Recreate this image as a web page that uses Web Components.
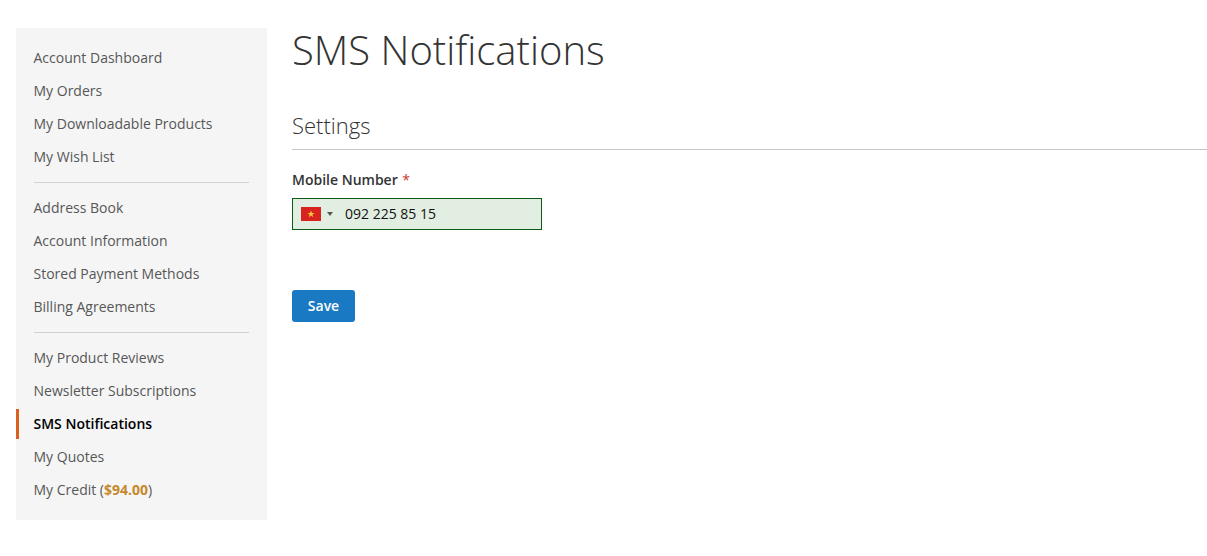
<!DOCTYPE html>
<html lang="en"><head><meta charset="utf-8"><title>SMS Notifications</title>
<style>
html,body{margin:0;background:#fff}
body{font-family:"Open Sans",sans-serif;font-size:14px;color:#333}
</style></head><body>
<account-page>
<account-nav slot="nav">
<nav-link>Account Dashboard</nav-link><nav-link>My Orders</nav-link><nav-link>My Downloadable Products</nav-link><nav-link>My Wish List</nav-link>
<nav-sep></nav-sep>
<nav-link>Address Book</nav-link><nav-link>Account Information</nav-link><nav-link>Stored Payment Methods</nav-link><nav-link>Billing Agreements</nav-link>
<nav-sep></nav-sep>
<nav-link>My Product Reviews</nav-link><nav-link>Newsletter Subscriptions</nav-link><nav-link current>SMS Notifications</nav-link><nav-link>My Quotes</nav-link>
<nav-link>My Credit (<credit-amount>$94.00</credit-amount>)</nav-link>
</account-nav>
<sms-form></sms-form>
</account-page>
<script>
function def(name,html){customElements.define(name,class extends HTMLElement{constructor(){super();this.attachShadow({mode:'open'}).innerHTML=html}})}
def('account-page',`<style>:host{display:flex;align-items:flex-start;gap:25px;padding:28px 0 36px 16px;box-sizing:border-box;width:1207px;height:556px;overflow:hidden}
::slotted([slot=nav]){flex:none}.m{flex:1;min-width:0}</style><slot name="nav"></slot><div class="m"><slot></slot></div>`);
def('account-nav',`<style>:host{display:block;width:251px;height:492px;box-sizing:border-box;padding:13px 0 0;background:#f5f5f5}</style><slot></slot>`);
def('nav-link',`<style>:host{display:block;height:33px;line-height:34px;padding-left:17.5px;color:#575757;font-size:14px;white-space:nowrap;box-sizing:border-box}
:host([current]){color:#000;font-weight:600;position:relative}
:host([current])::before{content:"";position:absolute;left:0;top:2px;bottom:1px;width:3px;background:#d9611f}</style><slot></slot>`);
def('nav-sep',`<style>:host{display:block;height:1px;margin:9px 18px 8px 18px;background:#d1d1d1}</style>`);
def('credit-amount',`<style>:host{display:inline;color:#c8882c;font-weight:700}</style><slot></slot>`);
def('sms-form',`<style>:host{display:block;color:#333}
h1{margin:0;font-weight:300;font-size:40px;line-height:44px;color:#333}
h2{margin:38px 0 0;font-weight:300;font-size:22px;line-height:30px;padding-bottom:9px;border-bottom:1px solid #c6c6c6;color:#333}
label{display:block;margin-top:20px;font-weight:600;font-size:14px;line-height:20px}
label span{color:#c9352f;margin-left:1px;font-weight:400}
.f{margin-top:8px;width:250px;height:32px;box-sizing:border-box;border:1px solid #0b5a16;background:#e3eee3;display:flex;align-items:center;padding:0 0 2px 8px;color:#111;font-size:14px}
svg{display:block;margin-top:2px}
.c{width:0;height:0;border:3.5px solid transparent;border-top:4px solid #555;border-bottom:0;margin:2px 0 0 6px}
.n{margin-left:12px}
button{display:block;margin-top:60px;width:63px;height:32px;border:0;border-radius:3px;background:#1979c3;color:#fff;font:600 14px "Open Sans",sans-serif;padding:0 0 2px}
</style>
<h1>SMS Notifications</h1><h2>Settings</h2>
<label>Mobile Number <span>*</span></label>
<div class="f"><svg width="20" height="14" viewBox="0 0 20 14"><rect width="20" height="14" fill="#d8231f"/><polygon fill="#f5c93f" points="10,3.400 10.900,6 13.600,6 11.400,7.600 12.200,10.200 10,8.600 7.800,10.200 8.600,7.600 6.400,6 9.100,6"/></svg><i class="c"></i><span class="n">092 225 85 15</span></div>
<button type="button">Save</button>`);
</script>
</body></html>
